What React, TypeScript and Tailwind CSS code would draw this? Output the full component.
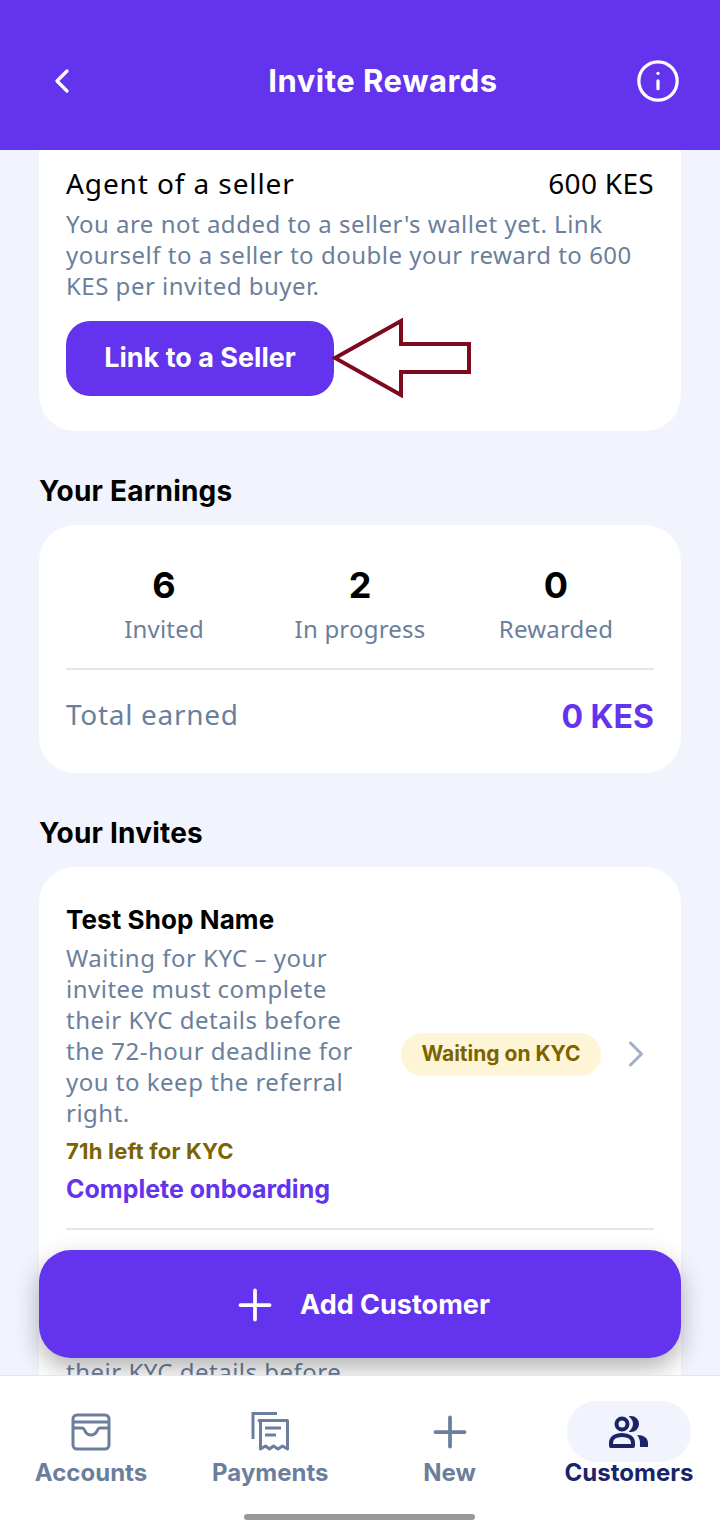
import { ChevronLeft, ChevronRight, Info, Plus } from 'lucide-react';

const bold = 'font-["Inter",sans-serif]';
const body = 'font-["Noto_Sans",sans-serif]';

const stats = [
  { value: '6', label: 'Invited' },
  { value: '2', label: 'In progress' },
  { value: '0', label: 'Rewarded' },
];

function WalletIcon() {
  return (
    <svg width="40" height="38" viewBox="0 0 40 38" fill="none" stroke="#6b7f9c" strokeWidth="3" strokeLinejoin="round">
      <rect x="2" y="2" width="36" height="34" rx="4" />
      <path d="M2 9h36" />
      <path d="M2 15h9c2 0 2 1 3 3 1.500 3 3.500 4 6 4s4.500-1 6-4c1-2 1-3 3-3h9" />
    </svg>
  );
}

function ReceiptIcon() {
  return (
    <svg width="38" height="40" viewBox="0 0 38 40" fill="none" stroke="#6b7f9c" strokeWidth="3">
      <path d="M26 1.500H2V27" />
      <path d="M8 8.500h28.500V37l-5-3-4.500 3-4.500-3-4 3-4-3-5 3V9z" strokeLinejoin="round" />
      <path d="M14 16h16M14 23h11" />
    </svg>
  );
}

function PeopleIcon() {
  return (
    <svg width="40" height="32" viewBox="0 0 40 32" fill="none">
      <circle cx="13" cy="8" r="5.500" stroke="#1a2469" strokeWidth="4" />
      <path d="M22 1c4 0 7 3 7 7s-3 7-7 7c2-2 3-4 3-7s-1-5-3-7z" fill="#1a2469" stroke="#1a2469" strokeWidth="2" />
      <path d="M2 30v-3c0-5 4-8 11-8s11 3 11 8v3z" stroke="#1a2469" strokeWidth="4" strokeLinejoin="round" />
      <path d="M28 19c7 0 11 3 11 8v4h-8v-4c0-3-1-6-3-8z" fill="#1a2469" />
    </svg>
  );
}

function NavItem({ icon, label, active }: { icon: React.ReactNode; label: string; active?: boolean }) {
  return (
    <div className="flex w-[124px] flex-col items-center">
      <div className={`flex h-[61px] w-[124px] items-center justify-center rounded-[30px] ${active ? 'bg-[#f1f4fd]' : ''}`}>
        {icon}
      </div>
      <span className={`${bold} mt-[-3px] whitespace-nowrap text-[24px] font-bold leading-[28px] ${active ? 'text-[#1a2469]' : 'text-[#6b7f9c]'}`}>
        {label}
      </span>
    </div>
  );
}

export default function App() {
  return (
    <div className={`${body} relative flex h-[1531px] w-[720px] flex-col overflow-hidden bg-[#f1f4fd]`}>
      <header className="relative z-10 flex h-[150px] shrink-0 items-center justify-between bg-[#6333ee] pl-[42px] pr-[39px] pt-[12px] text-white">
        <ChevronLeft size={40} strokeWidth={2} />
        <h1 className={`${bold} ml-[49px] text-[31px] font-bold tracking-[0.5px]`}>Invite Rewards</h1>
        <Info size={46} strokeWidth={1.700} />
      </header>

      <main className="min-h-0 flex-1 overflow-hidden px-[39px]">
        <section className="rounded-b-[36px] bg-white px-[27px] pb-[35px] pt-[15px]">
          <div className="flex justify-between text-[28px] leading-[36px] text-black">
            <span className="tracking-[0.9px]">Agent of a seller</span>
            <span className="tracking-[0.3px]">600 KES</span>
          </div>
          <p className="mt-[7px] text-[24px] leading-[31px] tracking-[0.5px] text-[#6b7f9c]">
            You are not added to a seller's wallet yet. Link yourself to a seller to double your reward to 600 KES per invited buyer.
          </p>
          <div className="relative mt-[20px] w-fit">
            <button className={`${bold} h-[75px] w-[268px] rounded-[24px] bg-[#6333ee] text-[27px] font-bold text-white`}>
              Link to a Seller
            </button>
            <svg className="absolute left-[266px] top-[-3px]" width="140" height="80" viewBox="0 0 140 80" fill="none">
              <path d="M3 40 69 3v23h68v28H69v23z" fill="white" stroke="#7d0a1f" strokeWidth="4" />
            </svg>
          </div>
        </section>

        <h2 className={`${bold} mt-[41px] text-[28px] font-bold leading-[38px] tracking-[0.2px] text-black`}>Your Earnings</h2>
        <section className="mt-[15px] rounded-[36px] bg-white px-[27px]">
          <div className="grid grid-cols-3 border-b-2 border-[#e3e6ea] pb-[22px] pt-[39px] text-center">
            {stats.map((stat) => (
              <div key={stat.label}>
                <div className={`${bold} text-[36px] font-bold leading-[42px] text-black`}>{stat.value}</div>
                <div className="mt-[6px] text-[24px] leading-[34px] tracking-[0.2px] text-[#6b7f9c]">{stat.label}</div>
              </div>
            ))}
          </div>
          <div className="flex h-[103px] items-center justify-between pb-[15px]">
            <span className="text-[28px] tracking-[0.7px] text-[#6b7f9c]">Total earned</span>
            <span className={`${bold} mt-[5px] text-[32px] font-bold text-[#6333ee]`}>0 KES</span>
          </div>
        </section>

        <h2 className={`${bold} mt-[41px] text-[28px] font-bold leading-[38px] tracking-[0.2px] text-black`}>Your Invites</h2>
        <section className="mt-[15px] rounded-t-[36px] bg-white px-[27px] pt-[35px]">
          <div className="flex items-center border-b-2 border-[#e3e6ea] pb-[22px]">
            <div className="w-[292px] shrink-0">
              <h3 className={`${bold} text-[26px] font-bold leading-[36px] tracking-[0.1px] text-black`}>Test Shop Name</h3>
              <p className="mt-[4px] text-[24px] leading-[31px] tracking-[0.5px] text-[#6b7f9c]">
                Waiting for KYC – your invitee must complete their KYC details before the 72-hour deadline for you to keep the referral right.
              </p>
              <p className={`${bold} mt-[6px] text-[22px] font-bold leading-[34px] tracking-[0.2px] text-[#7d6300]`}>71h left for KYC</p>
              <p className={`${bold} mt-[4px] text-[25px] font-bold leading-[34px] text-[#6333ee]`}>Complete onboarding</p>
            </div>
            <span className={`${bold} ml-[43px] flex h-[43px] w-[200px] shrink-0 items-center justify-center rounded-full bg-[#fdf5d6] text-[21px] font-bold text-[#7d6300]`}>
              Waiting on KYC
            </span>
            <ChevronRight className="ml-[13px] shrink-0 text-[#9fafc8]" size={44} strokeWidth={1.600} />
          </div>
          {/* next invite, only its third line shows between the button and the nav */}
          <p className="mt-[126px] text-[24px] leading-[31px] tracking-[0.5px] text-[#6b7f9c]">their KYC details before</p>
        </section>
      </main>

      <button className={`${bold} absolute left-[39px] top-[1250px] z-10 flex h-[108px] w-[642px] items-center justify-center gap-[20px] rounded-[32px] bg-[#6333ee] pt-[2px] text-[27px] font-bold text-white shadow-[0_10px_24px_rgba(0,0,0,0.3)]`}>
        <Plus size={50} strokeWidth={1.800} />
        Add Customer
      </button>

      <nav className="relative z-10 flex h-[156px] shrink-0 items-start justify-between border-t border-[#e3e6ea] bg-white px-[29px] pt-[25px]">
        <NavItem icon={<WalletIcon />} label="Accounts" />
        <NavItem icon={<ReceiptIcon />} label="Payments" />
        <NavItem icon={<Plus size={50} strokeWidth={1.800} className="text-[#6b7f9c]" />} label="New" />
        <NavItem icon={<PeopleIcon />} label="Customers" active />
        <div className="absolute left-[244px] top-[138px] h-[6px] w-[231px] rounded-full bg-[#999]" />
      </nav>
    </div>
  );
}
